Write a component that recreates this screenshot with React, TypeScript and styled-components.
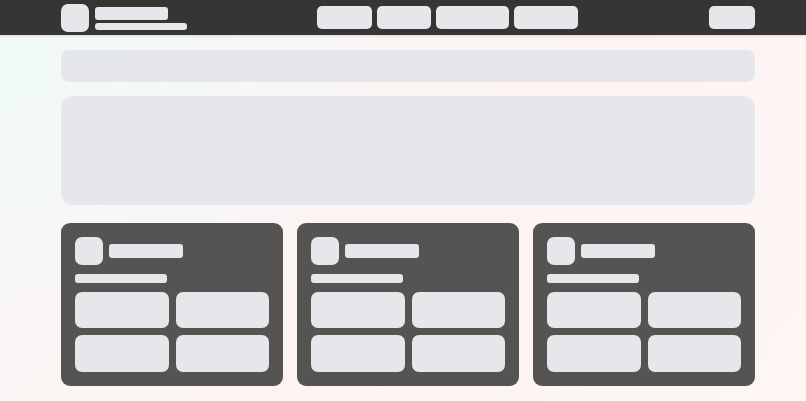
import styled, { createGlobalStyle } from "styled-components";

const GlobalStyle = createGlobalStyle`
  html, body {
    margin: 0;
    padding: 0;
  }
  body {
    font-family: "Liberation Sans", Arial, sans-serif;
    min-height: 401px;
    background:
      radial-gradient(ellipse 420px 260px at 0% 18%, #f1f9f9 0%, rgba(241, 249, 249, 0) 100%),
      linear-gradient(135deg, #f6f8f8 0%, #fdf4f2 50%, #fdf6f5 100%);
  }
`;

const Page = styled.div`
  min-height: 401px;
  display: flex;
  flex-direction: column;
`;

const Header = styled.header`
  height: 35px;
  background: #363534;
  box-shadow: 0 1px 3px rgba(0, 0, 0, 0.12);
  display: flex;
  align-items: center;
  padding: 0 51px 0 61px;
`;

const Brand = styled.div`
  display: flex;
  align-items: center;
  gap: 6px;
  width: 256px;
`;

const Bone = styled.div<{ $w?: number; $h: number; $r?: number }>`
  background: #e6e7ea;
  width: ${(p) => (p.$w ? `${p.$w}px` : "100%")};
  height: ${(p) => p.$h}px;
  border-radius: ${(p) => p.$r ?? 3}px;
  flex-shrink: 0;
`;

const BrandText = styled.div`
  display: flex;
  flex-direction: column;
  gap: 3px;
  margin-top: 1px;
`;

const Nav = styled.nav`
  display: flex;
  gap: 5px;
`;

const Spacer = styled.div`
  flex: 1;
`;

const Main = styled.main`
  width: 694px;
  margin-left: 61px;
  padding-top: 15px;
  display: flex;
  flex-direction: column;
`;

const Search = styled.div`
  height: 32px;
  border-radius: 8px;
  background: #e6e7ea;
`;

const Hero = styled.div`
  margin-top: 14px;
  height: 109px;
  border-radius: 12px;
  background: #e6e7ea;
`;

const Cards = styled.div`
  margin-top: 18px;
  display: grid;
  grid-template-columns: repeat(3, 222px);
  gap: 14px;
`;

const Card = styled.div`
  background: #555453;
  border-radius: 9px;
  padding: 14px 14px 13px;
  height: 163px;
  box-sizing: border-box;
  display: flex;
  flex-direction: column;
`;

const CardHead = styled.div`
  display: flex;
  align-items: center;
  gap: 6px;
`;

const Tiles = styled.div`
  margin-top: 9px;
  display: grid;
  grid-template-columns: 1fr 1fr;
  column-gap: 7px;
  row-gap: 7px;
`;

const navWidths = [55, 54, 73, 64];

function SkeletonCard() {
  return (
    <Card>
      <CardHead>
        <Bone $w={28} $h={28} $r={7} />
        <Bone $w={74} $h={14} />
      </CardHead>
      <Bone $w={92} $h={9} style={{ marginTop: 9 }} />
      <Tiles>
        <Bone $h={36} $r={7} />
        <Bone $h={36} $r={7} />
        <Bone $h={37} $r={7} />
        <Bone $h={37} $r={7} />
      </Tiles>
    </Card>
  );
}

export default function App() {
  return (
    <>
      <GlobalStyle />
      <Page>
        <Header>
          <Brand>
            <Bone $w={28} $h={28} $r={7} />
            <BrandText>
              <Bone $w={73} $h={13} />
              <Bone $w={92} $h={7} />
            </BrandText>
          </Brand>
          <Nav>
            {navWidths.map((w, i) => (
              <Bone key={i} $w={w} $h={23} $r={5} />
            ))}
          </Nav>
          <Spacer />
          <Bone $w={46} $h={23} $r={5} />
        </Header>
        <Main>
          <Search />
          <Hero />
          <Cards>
            <SkeletonCard />
            <SkeletonCard />
            <SkeletonCard />
          </Cards>
        </Main>
      </Page>
    </>
  );
}
